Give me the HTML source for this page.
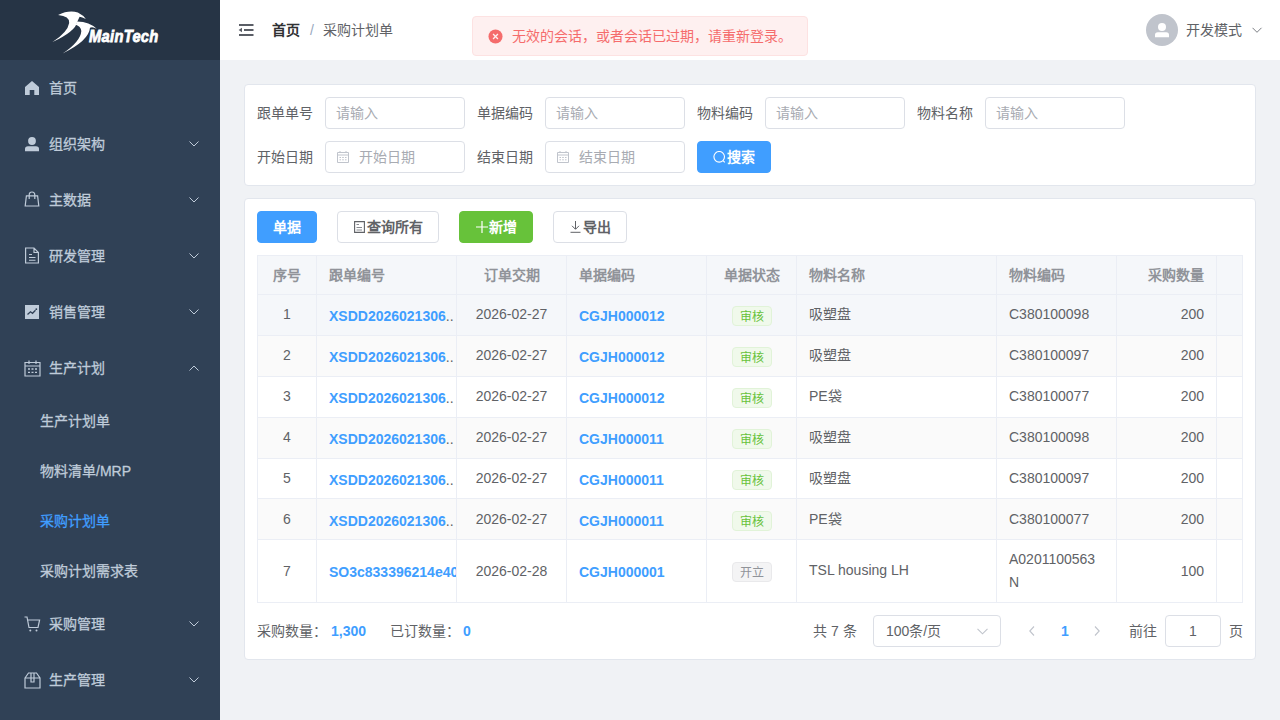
<!DOCTYPE html>
<html lang="zh-CN"><head><meta charset="utf-8">
<style>
*{box-sizing:border-box;margin:0;padding:0}
html,body{width:1280px;height:720px;overflow:hidden;background:#f0f2f5;font-family:"Liberation Sans",sans-serif;font-size:14px;color:#606266}
.a{position:absolute}
#side{left:0;top:0;width:220px;height:720px;background:#304156}
#logo{left:0;top:0;width:220px;height:60px;background:#263445}
.mi{position:absolute;left:0;width:220px;height:56px;color:#bfcbd9;font-size:14px;-webkit-text-stroke:0.3px #bfcbd9}
.mi .t{position:absolute;left:49px;top:0;line-height:56px;white-space:nowrap}
.mi svg.ic{position:absolute;left:24px;top:20px}
.mi .ch{position:absolute;left:189px;top:25px}
.si{position:absolute;left:0;width:220px;height:50px;color:#bfcbd9;-webkit-text-stroke:0.3px currentColor}
.si .t{position:absolute;left:40px;top:0;line-height:50px;white-space:nowrap}
#hdr{left:220px;top:0;width:1060px;height:60px;background:#fff}
.card{position:absolute;background:#fff;border:1px solid #e2e6ed;border-radius:4px}
.lbl{position:absolute;line-height:32px;color:#606266;font-weight:500;white-space:nowrap}
.inp{position:absolute;width:140px;height:32px;border:1px solid #dcdfe6;border-radius:4px;background:#fff;color:#a8abb2;line-height:30px;padding-left:10px;white-space:nowrap}
.btn{position:absolute;height:32px;border-radius:4px;line-height:30px;text-align:center;font-size:14px;white-space:nowrap;border:1px solid #dcdfe6;background:#fff;color:#606266;font-weight:bold}
.cl{padding:0 12px;white-space:nowrap;overflow:hidden;color:#606266}
.cl.th{color:#909399;font-weight:bold}
.cl.el{padding-right:0}
.lk{color:#409eff;font-weight:bold}
.dots{color:#606266}
.tag{display:inline-block;height:20px;line-height:18px;padding:1px 7px 0;font-size:12px;border:1px solid #e1f3d8;background:#f0f9eb;color:#67c23a;border-radius:4px;vertical-align:middle}
.tag.i{border-color:#e9e9eb;background:#f4f4f5;color:#909399}
</style></head><body>
<div id="side" class="a">
  <div id="logo" class="a">
    <svg class="a" style="left:48px;top:8px" width="50" height="50" viewBox="0 0 720 720"><path fill="#fff" d="M145 100 Q300 25 430 65 Q510 105 545 160 Q490 130 455 125 L420 200 Q400 330 65 490 Q285 345 305 215 Q315 115 145 100Z"/><path fill="#fff" d="M210 655 Q470 480 480 330 Q470 260 400 240 L420 195 Q600 200 700 300 Q640 265 605 285 Q590 470 210 655Z"/></svg>
    <div class="a" style="left:89px;top:27px;font:italic bold 15px/16px 'Liberation Sans',sans-serif;color:#fff;-webkit-text-stroke:0.7px #fff;letter-spacing:0.3px;transform:scale(0.98,1.15);transform-origin:0 0;white-space:nowrap">MainTech</div>
  </div>
  <div class="mi" style="top:60px"><svg class="ic" width="14" height="14" viewBox="0 0 14 14" style="left:25px;top:21px"><path fill="#bfcbd9" d="M0 6 L7 0 L14 6 V14 H9.3 V9 H4.7 V14 H0Z"/></svg><span class="t">首页</span></div>
  <div class="mi" style="top:116px"><svg class="ic" width="14" height="15" viewBox="0 0 14 15" style="left:25px;top:21px"><circle cx="7" cy="4" r="3.9" fill="#bfcbd9"/><path fill="#bfcbd9" d="M0 14.3 V12 Q0 9.2 3 9.2 H11 Q14 9.2 14 12 V14.3Z"/></svg><span class="t">组织架构</span><svg class="ch" width="10" height="6" viewBox="0 0 10 6"><path d="M0.5 0.5 L5 5 L9.5 0.5" fill="none" stroke="#bfcbd9" stroke-width="1"/></svg></div>
  <div class="mi" style="top:172px"><svg class="ic" width="16" height="16" viewBox="0 0 16 16" style="left:24px;top:19px"><path fill="none" stroke="#bfcbd9" stroke-width="1.2" d="M2.4 4.8 H13.6 L14.8 15 H1.2Z M5.2 8 V4 Q5.2 1 8 1 Q10.8 1 10.8 4 V8"/></svg><span class="t">主数据</span><svg class="ch" width="10" height="6" viewBox="0 0 10 6"><path d="M0.5 0.5 L5 5 L9.5 0.5" fill="none" stroke="#bfcbd9" stroke-width="1"/></svg></div>
  <div class="mi" style="top:228px"><svg class="ic" width="16" height="17" viewBox="0 0 16 17" style="left:24px;top:19px"><path fill="none" stroke="#bfcbd9" stroke-width="1.2" d="M1.6 1 H10 L14.4 5.5 V16 H1.6Z M10 1 V5.5 H14.4"/><path stroke="#bfcbd9" stroke-width="1.1" d="M5 7.5 H8 M5 10.5 H11.5 M5 13.2 H11.5"/></svg><span class="t">研发管理</span><svg class="ch" width="10" height="6" viewBox="0 0 10 6"><path d="M0.5 0.5 L5 5 L9.5 0.5" fill="none" stroke="#bfcbd9" stroke-width="1"/></svg></div>
  <div class="mi" style="top:284px"><svg class="ic" width="14" height="14" viewBox="0 0 14 14" style="left:25px;top:21px"><rect width="14" height="14" fill="#bfcbd9"/><path d="M2.5 9.5 L5.5 6.8 L7.5 8.3 L10.5 5.2" fill="none" stroke="#304156" stroke-width="1.3"/><circle cx="11.3" cy="4.2" r="0.9" fill="#304156"/></svg><span class="t">销售管理</span><svg class="ch" width="10" height="6" viewBox="0 0 10 6"><path d="M0.5 0.5 L5 5 L9.5 0.5" fill="none" stroke="#bfcbd9" stroke-width="1"/></svg></div>
  <div class="mi" style="top:340px"><svg class="ic" width="17" height="17" viewBox="0 0 17 17" style="left:23.5px;top:19.5px"><path fill="none" stroke="#bfcbd9" stroke-width="1.2" d="M1 2.5 H16 V16 H1Z M1 6 H16 M5 0.5 V4 M12 0.5 V4"/><path stroke="#bfcbd9" stroke-width="1.3" d="M4 9 H6 M7.5 9 H9.5 M11 9 H13 M4 12.3 H6 M7.5 12.3 H9.5 M11 12.3 H13"/></svg><span class="t">生产计划</span><svg class="ch" width="10" height="6" viewBox="0 0 10 6"><path d="M0.5 5.5 L5 1 L9.5 5.5" fill="none" stroke="#bfcbd9" stroke-width="1"/></svg></div>
  <div class="si" style="top:396px"><span class="t">生产计划单</span></div>
  <div class="si" style="top:446px"><span class="t">物料清单/MRP</span></div>
  <div class="si" style="top:496px;color:#409eff"><span class="t">采购计划单</span></div>
  <div class="si" style="top:546px"><span class="t">采购计划需求表</span></div>
  <div class="mi" style="top:596px"><svg class="ic" width="17" height="16" viewBox="0 0 17 16" style="left:23.5px;top:19.5px"><path fill="none" stroke="#bfcbd9" stroke-width="1.2" d="M0.5 1 H3 L5 11.5 H14 L15.6 4 H4"/><circle cx="6.3" cy="14.5" r="1" fill="#bfcbd9"/><circle cx="12.5" cy="14.5" r="1" fill="#bfcbd9"/></svg><span class="t">采购管理</span><svg class="ch" width="10" height="6" viewBox="0 0 10 6"><path d="M0.5 0.5 L5 5 L9.5 0.5" fill="none" stroke="#bfcbd9" stroke-width="1"/></svg></div>
  <div class="mi" style="top:652px"><svg class="ic" width="17" height="17" viewBox="0 0 17 17" style="left:23.5px;top:19.5px"><path fill="none" stroke="#bfcbd9" stroke-width="1.2" d="M1 6 L4.5 1 H12.5 L16 6 V16 H1Z M1 6 H16 M7 1 V10 H10 V1"/></svg><span class="t">生产管理</span><svg class="ch" width="10" height="6" viewBox="0 0 10 6"><path d="M0.5 0.5 L5 5 L9.5 0.5" fill="none" stroke="#bfcbd9" stroke-width="1"/></svg></div>
</div>
<div id="hdr" class="a">
  <svg class="a" style="left:18px;top:23px" width="16" height="14" viewBox="0 0 16 14"><path fill="#5a5e66" d="M1 1 H15.5 V3 H1Z M6 6 H15.5 V8 H6Z M1 11 H15.5 V13 H1Z M4 4.8 L0.6 7 L4 9.2Z"/></svg>
  <div class="a" style="left:52px;top:0;line-height:60px;color:#303133;font-weight:bold;white-space:nowrap">首页</div>
  <div class="a" style="left:90px;top:0;line-height:60px;color:#97a8be;white-space:nowrap">/</div>
  <div class="a" style="left:103px;top:0;line-height:60px;color:#606266;white-space:nowrap">采购计划单</div>
  <div class="a" style="left:926px;top:14px;width:32px;height:32px;border-radius:50%;background:#c0c4cc"><svg class="a" style="left:8px;top:8px" width="16" height="16" viewBox="0 0 16 16"><circle cx="8" cy="5" r="4" fill="#fff"/><path fill="#fff" d="M1 15.2 V13 Q1 10.2 3.8 10.2 H12.2 Q15 10.2 15 13 V15.2Z"/></svg></div>
  <div class="a" style="left:966px;top:0;line-height:60px;color:#606266;white-space:nowrap">开发模式</div>
  <svg class="a" style="left:1032px;top:27px" width="11" height="7" viewBox="0 0 11 7"><path d="M0.5 0.8 L5 5.3 L9.5 0.8" fill="none" stroke="#7a7d83" stroke-width="1"/></svg>
</div>
<div class="a" style="left:472px;top:16px;width:336px;height:40px;background:#fef0f0;border:1px solid #fde2e2;border-radius:4px">
  <svg class="a" style="left:15px;top:12px" width="15" height="15" viewBox="0 0 16 16"><circle cx="8" cy="8" r="7.5" fill="#f56c6c"/><path d="M5.4 5.4 L10.6 10.6 M10.6 5.4 L5.4 10.6" stroke="#fef0f0" stroke-width="1.4"/></svg>
  <div class="a" style="left:39px;top:0;line-height:38px;color:#f56c6c;white-space:nowrap">无效的会话，或者会话已过期，请重新登录。</div>
</div>
<div class="card" style="left:244px;top:84px;width:1012px;height:102px"></div>
<div class="lbl" style="left:257px;top:97px">跟单单号</div>
<div class="inp" style="left:325px;top:97px">请输入</div>
<div class="lbl" style="left:477px;top:97px">单据编码</div>
<div class="inp" style="left:545px;top:97px">请输入</div>
<div class="lbl" style="left:697px;top:97px">物料编码</div>
<div class="inp" style="left:765px;top:97px">请输入</div>
<div class="lbl" style="left:917px;top:97px">物料名称</div>
<div class="inp" style="left:985px;top:97px">请输入</div>
<div class="lbl" style="left:257px;top:141px">开始日期</div>
<div class="inp" style="left:325px;top:141px;padding-left:33px"><svg class="a" style="left:11px;top:9px" width="12" height="12" viewBox="0 0 12 12"><path fill="none" stroke="#c0c4cc" stroke-width="1" d="M0.5 1.5 H11.5 V11.5 H0.5Z M0.5 4 H11.5 M3 0 V2 M9 0 V2"/><path stroke="#c0c4cc" stroke-width="1" d="M2.5 6.5 H4 M5.2 6.5 H6.8 M8 6.5 H9.5 M2.5 8.8 H4 M5.2 8.8 H6.8 M8 8.8 H9.5"/></svg>开始日期</div>
<div class="lbl" style="left:477px;top:141px">结束日期</div>
<div class="inp" style="left:545px;top:141px;padding-left:33px"><svg class="a" style="left:11px;top:9px" width="12" height="12" viewBox="0 0 12 12"><path fill="none" stroke="#c0c4cc" stroke-width="1" d="M0.5 1.5 H11.5 V11.5 H0.5Z M0.5 4 H11.5 M3 0 V2 M9 0 V2"/><path stroke="#c0c4cc" stroke-width="1" d="M2.5 6.5 H4 M5.2 6.5 H6.8 M8 6.5 H9.5 M2.5 8.8 H4 M5.2 8.8 H6.8 M8 8.8 H9.5"/></svg>结束日期</div>
<div class="btn" style="left:697px;top:141px;width:74px;background:#409eff;border-color:#409eff;color:#fff"><svg style="vertical-align:-2px;margin-right:1px" width="13" height="13" viewBox="0 0 13 13"><circle cx="6.2" cy="5.8" r="5.3" fill="none" stroke="#fff" stroke-width="1.1"/><path d="M10 9.6 L11.8 11.4" stroke="#fff" stroke-width="1.1"/></svg>搜索</div>
<div class="card" style="left:244px;top:198px;width:1012px;height:462px"></div>
<div class="btn" style="left:257px;top:211px;width:60px;background:#409eff;border-color:#409eff;color:#fff">单据</div>
<div class="btn" style="left:337px;top:211px;width:102px"><svg style="vertical-align:-1px;margin-right:2px" width="11" height="12" viewBox="0 0 11 12"><path fill="none" stroke="#606266" stroke-width="1.1" stroke-linejoin="miter" d="M0.6 0.6 H10.4 V11.4 H0.6Z"/><path stroke="#888a90" stroke-width="1" d="M2.5 3.5 H5 M2.5 6.5 H8 M2.5 9 H8"/></svg>查询所有</div>
<div class="btn" style="left:459px;top:211px;width:74px;background:#67c23a;border-color:#67c23a;color:#fff"><svg style="vertical-align:-1px;margin-right:1px" width="12" height="12" viewBox="0 0 12 12"><path d="M6 0 V12 M0 6 H12" stroke="#fff" stroke-width="1.2"/></svg>新增</div>
<div class="btn" style="left:553px;top:211px;width:74px"><svg style="vertical-align:-1px;margin-right:2px" width="11" height="12" viewBox="0 0 11 12"><path fill="none" stroke="#606266" stroke-width="1" d="M5.5 0 V8 M2 4.8 L5.5 8.3 L9 4.8 M0.5 11.3 H10.5"/></svg>导出</div>
<!--TABLE-->
<div class="a" style="left:257px;top:255px;width:986px;height:39px;background:#f5f7fa"></div>
<div class="a" style="left:257px;top:295px;width:986px;height:40px;background:#f5f7fa"></div>
<div class="a" style="left:257px;top:336px;width:986px;height:40px;background:#fafafa"></div>
<div class="a" style="left:257px;top:377px;width:986px;height:40px;background:#fff"></div>
<div class="a" style="left:257px;top:418px;width:986px;height:40px;background:#fafafa"></div>
<div class="a" style="left:257px;top:459px;width:986px;height:39px;background:#fff"></div>
<div class="a" style="left:257px;top:499px;width:986px;height:40px;background:#fafafa"></div>
<div class="a" style="left:257px;top:255px;width:986px;height:1px;background:#ebeef5"></div>
<div class="a" style="left:257px;top:294px;width:986px;height:1px;background:#ebeef5"></div>
<div class="a" style="left:257px;top:335px;width:986px;height:1px;background:#ebeef5"></div>
<div class="a" style="left:257px;top:376px;width:986px;height:1px;background:#ebeef5"></div>
<div class="a" style="left:257px;top:417px;width:986px;height:1px;background:#ebeef5"></div>
<div class="a" style="left:257px;top:458px;width:986px;height:1px;background:#ebeef5"></div>
<div class="a" style="left:257px;top:498px;width:986px;height:1px;background:#ebeef5"></div>
<div class="a" style="left:257px;top:539px;width:986px;height:1px;background:#ebeef5"></div>
<div class="a" style="left:257px;top:602px;width:986px;height:1px;background:#ebeef5"></div>
<div class="a" style="left:257px;top:255px;width:1px;height:348px;background:#ebeef5"></div>
<div class="a" style="left:316px;top:255px;width:1px;height:348px;background:#ebeef5"></div>
<div class="a" style="left:456px;top:255px;width:1px;height:348px;background:#ebeef5"></div>
<div class="a" style="left:566px;top:255px;width:1px;height:348px;background:#ebeef5"></div>
<div class="a" style="left:706px;top:255px;width:1px;height:348px;background:#ebeef5"></div>
<div class="a" style="left:796px;top:255px;width:1px;height:348px;background:#ebeef5"></div>
<div class="a" style="left:996px;top:255px;width:1px;height:348px;background:#ebeef5"></div>
<div class="a" style="left:1116px;top:255px;width:1px;height:348px;background:#ebeef5"></div>
<div class="a" style="left:1216px;top:255px;width:1px;height:348px;background:#ebeef5"></div>
<div class="a" style="left:1242px;top:255px;width:1px;height:348px;background:#ebeef5"></div>
<div class="a cl th" style="left:258px;top:256px;width:58px;height:38px;line-height:38px;text-align:center;">序号</div>
<div class="a cl th" style="left:317px;top:256px;width:139px;height:38px;line-height:38px;text-align:left;">跟单编号</div>
<div class="a cl th" style="left:457px;top:256px;width:109px;height:38px;line-height:38px;text-align:center;">订单交期</div>
<div class="a cl th" style="left:567px;top:256px;width:139px;height:38px;line-height:38px;text-align:left;">单据编码</div>
<div class="a cl th" style="left:707px;top:256px;width:89px;height:38px;line-height:38px;text-align:center;">单据状态</div>
<div class="a cl th" style="left:797px;top:256px;width:199px;height:38px;line-height:38px;text-align:left;">物料名称</div>
<div class="a cl th" style="left:997px;top:256px;width:119px;height:38px;line-height:38px;text-align:left;">物料编码</div>
<div class="a cl th" style="left:1117px;top:256px;width:99px;height:38px;line-height:38px;text-align:right;">采购数量</div>
<div class="a cl th" style="left:1217px;top:256px;width:25px;height:38px;line-height:38px;text-align:left;"></div>
<div class="a cl " style="left:258px;top:294px;width:58px;height:40px;line-height:40px;text-align:center;">1</div>
<div class="a cl el" style="left:317px;top:296px;width:139px;height:40px;line-height:40px;text-align:left;"><span class="lk">XSDD2026021306</span><span class="dots">..</span></div>
<div class="a cl " style="left:457px;top:294px;width:109px;height:40px;line-height:40px;text-align:center;">2026-02-27</div>
<div class="a cl " style="left:567px;top:296px;width:139px;height:40px;line-height:40px;text-align:left;"><span class="lk">CGJH000012</span></div>
<div class="a cl " style="left:707px;top:295px;width:89px;height:40px;line-height:40px;text-align:center;"><span class="tag">审核</span></div>
<div class="a cl " style="left:797px;top:294px;width:199px;height:40px;line-height:40px;text-align:left;">吸塑盘</div>
<div class="a cl " style="left:997px;top:294px;width:119px;height:40px;line-height:40px;text-align:left;">C380100098</div>
<div class="a cl " style="left:1117px;top:294px;width:99px;height:40px;line-height:40px;text-align:right;">200</div>
<div class="a cl " style="left:258px;top:335px;width:58px;height:40px;line-height:40px;text-align:center;">2</div>
<div class="a cl el" style="left:317px;top:337px;width:139px;height:40px;line-height:40px;text-align:left;"><span class="lk">XSDD2026021306</span><span class="dots">..</span></div>
<div class="a cl " style="left:457px;top:335px;width:109px;height:40px;line-height:40px;text-align:center;">2026-02-27</div>
<div class="a cl " style="left:567px;top:337px;width:139px;height:40px;line-height:40px;text-align:left;"><span class="lk">CGJH000012</span></div>
<div class="a cl " style="left:707px;top:336px;width:89px;height:40px;line-height:40px;text-align:center;"><span class="tag">审核</span></div>
<div class="a cl " style="left:797px;top:335px;width:199px;height:40px;line-height:40px;text-align:left;">吸塑盘</div>
<div class="a cl " style="left:997px;top:335px;width:119px;height:40px;line-height:40px;text-align:left;">C380100097</div>
<div class="a cl " style="left:1117px;top:335px;width:99px;height:40px;line-height:40px;text-align:right;">200</div>
<div class="a cl " style="left:258px;top:376px;width:58px;height:40px;line-height:40px;text-align:center;">3</div>
<div class="a cl el" style="left:317px;top:378px;width:139px;height:40px;line-height:40px;text-align:left;"><span class="lk">XSDD2026021306</span><span class="dots">..</span></div>
<div class="a cl " style="left:457px;top:376px;width:109px;height:40px;line-height:40px;text-align:center;">2026-02-27</div>
<div class="a cl " style="left:567px;top:378px;width:139px;height:40px;line-height:40px;text-align:left;"><span class="lk">CGJH000012</span></div>
<div class="a cl " style="left:707px;top:377px;width:89px;height:40px;line-height:40px;text-align:center;"><span class="tag">审核</span></div>
<div class="a cl " style="left:797px;top:376px;width:199px;height:40px;line-height:40px;text-align:left;">PE袋</div>
<div class="a cl " style="left:997px;top:376px;width:119px;height:40px;line-height:40px;text-align:left;">C380100077</div>
<div class="a cl " style="left:1117px;top:376px;width:99px;height:40px;line-height:40px;text-align:right;">200</div>
<div class="a cl " style="left:258px;top:417px;width:58px;height:40px;line-height:40px;text-align:center;">4</div>
<div class="a cl el" style="left:317px;top:419px;width:139px;height:40px;line-height:40px;text-align:left;"><span class="lk">XSDD2026021306</span><span class="dots">..</span></div>
<div class="a cl " style="left:457px;top:417px;width:109px;height:40px;line-height:40px;text-align:center;">2026-02-27</div>
<div class="a cl " style="left:567px;top:419px;width:139px;height:40px;line-height:40px;text-align:left;"><span class="lk">CGJH000011</span></div>
<div class="a cl " style="left:707px;top:418px;width:89px;height:40px;line-height:40px;text-align:center;"><span class="tag">审核</span></div>
<div class="a cl " style="left:797px;top:417px;width:199px;height:40px;line-height:40px;text-align:left;">吸塑盘</div>
<div class="a cl " style="left:997px;top:417px;width:119px;height:40px;line-height:40px;text-align:left;">C380100098</div>
<div class="a cl " style="left:1117px;top:417px;width:99px;height:40px;line-height:40px;text-align:right;">200</div>
<div class="a cl " style="left:258px;top:458px;width:58px;height:40px;line-height:40px;text-align:center;">5</div>
<div class="a cl el" style="left:317px;top:460px;width:139px;height:40px;line-height:40px;text-align:left;"><span class="lk">XSDD2026021306</span><span class="dots">..</span></div>
<div class="a cl " style="left:457px;top:458px;width:109px;height:40px;line-height:40px;text-align:center;">2026-02-27</div>
<div class="a cl " style="left:567px;top:460px;width:139px;height:40px;line-height:40px;text-align:left;"><span class="lk">CGJH000011</span></div>
<div class="a cl " style="left:707px;top:459px;width:89px;height:40px;line-height:40px;text-align:center;"><span class="tag">审核</span></div>
<div class="a cl " style="left:797px;top:458px;width:199px;height:40px;line-height:40px;text-align:left;">吸塑盘</div>
<div class="a cl " style="left:997px;top:458px;width:119px;height:40px;line-height:40px;text-align:left;">C380100097</div>
<div class="a cl " style="left:1117px;top:458px;width:99px;height:40px;line-height:40px;text-align:right;">200</div>
<div class="a cl " style="left:258px;top:499px;width:58px;height:40px;line-height:40px;text-align:center;">6</div>
<div class="a cl el" style="left:317px;top:501px;width:139px;height:40px;line-height:40px;text-align:left;"><span class="lk">XSDD2026021306</span><span class="dots">..</span></div>
<div class="a cl " style="left:457px;top:499px;width:109px;height:40px;line-height:40px;text-align:center;">2026-02-27</div>
<div class="a cl " style="left:567px;top:501px;width:139px;height:40px;line-height:40px;text-align:left;"><span class="lk">CGJH000011</span></div>
<div class="a cl " style="left:707px;top:500px;width:89px;height:40px;line-height:40px;text-align:center;"><span class="tag">审核</span></div>
<div class="a cl " style="left:797px;top:499px;width:199px;height:40px;line-height:40px;text-align:left;">PE袋</div>
<div class="a cl " style="left:997px;top:499px;width:119px;height:40px;line-height:40px;text-align:left;">C380100077</div>
<div class="a cl " style="left:1117px;top:499px;width:99px;height:40px;line-height:40px;text-align:right;">200</div>
<div class="a cl " style="left:258px;top:540px;width:58px;height:62px;line-height:62px;text-align:center;">7</div>
<div class="a cl el" style="left:317px;top:541px;width:139px;height:62px;line-height:62px;text-align:left;"><span class="lk">SO3c833396214e40</span></div>
<div class="a cl " style="left:457px;top:540px;width:109px;height:62px;line-height:62px;text-align:center;">2026-02-28</div>
<div class="a cl " style="left:567px;top:541px;width:139px;height:62px;line-height:62px;text-align:left;"><span class="lk">CGJH000001</span></div>
<div class="a cl " style="left:707px;top:540px;width:89px;height:62px;line-height:62px;text-align:center;"><span class="tag i">开立</span></div>
<div class="a cl " style="left:797px;top:539px;width:199px;height:62px;line-height:62px;text-align:left;">TSL housing LH</div>
<div class="a cl" style="left:997px;top:548px;width:119px;line-height:23px;white-space:normal;word-break:break-all">A0201100563 N</div>
<div class="a cl " style="left:1117px;top:540px;width:99px;height:62px;line-height:62px;text-align:right;">100</div>
<!--/TABLE-->
<div class="a" style="left:257px;top:615px;line-height:32px;white-space:nowrap">采购数量：</div>
<div class="a lk" style="left:331px;top:615px;line-height:32px">1,300</div>
<div class="a" style="left:390px;top:615px;line-height:32px;white-space:nowrap">已订数量：</div>
<div class="a lk" style="left:463px;top:615px;line-height:32px">0</div>
<div class="a" style="left:813px;top:615px;line-height:32px;white-space:nowrap">共 7 条</div>
<div class="a" style="left:873px;top:615px;width:128px;height:32px;border:1px solid #dcdfe6;border-radius:4px;line-height:30px;padding-left:12px;color:#606266">100条/页<svg class="a" style="left:103px;top:12px" width="11" height="7" viewBox="0 0 11 7"><path d="M0.5 0.8 L5.5 5.8 L10.5 0.8" fill="none" stroke="#c0c4cc" stroke-width="1.1"/></svg></div>
<svg class="a" style="left:1029px;top:626px" width="6" height="10" viewBox="0 0 6 10"><path d="M5 0.5 L0.8 5 L5 9.5" fill="none" stroke="#c0c4cc" stroke-width="1.1"/></svg>
<div class="a lk" style="left:1061px;top:615px;line-height:32px">1</div>
<svg class="a" style="left:1094px;top:626px" width="6" height="10" viewBox="0 0 6 10"><path d="M1 0.5 L5.2 5 L1 9.5" fill="none" stroke="#c0c4cc" stroke-width="1.1"/></svg>
<div class="a" style="left:1129px;top:615px;line-height:32px;white-space:nowrap">前往</div>
<div class="a" style="left:1165px;top:615px;width:56px;height:32px;border:1px solid #dcdfe6;border-radius:4px;line-height:30px;text-align:center;color:#606266">1</div>
<div class="a" style="left:1229px;top:615px;line-height:32px">页</div>
</body></html>
